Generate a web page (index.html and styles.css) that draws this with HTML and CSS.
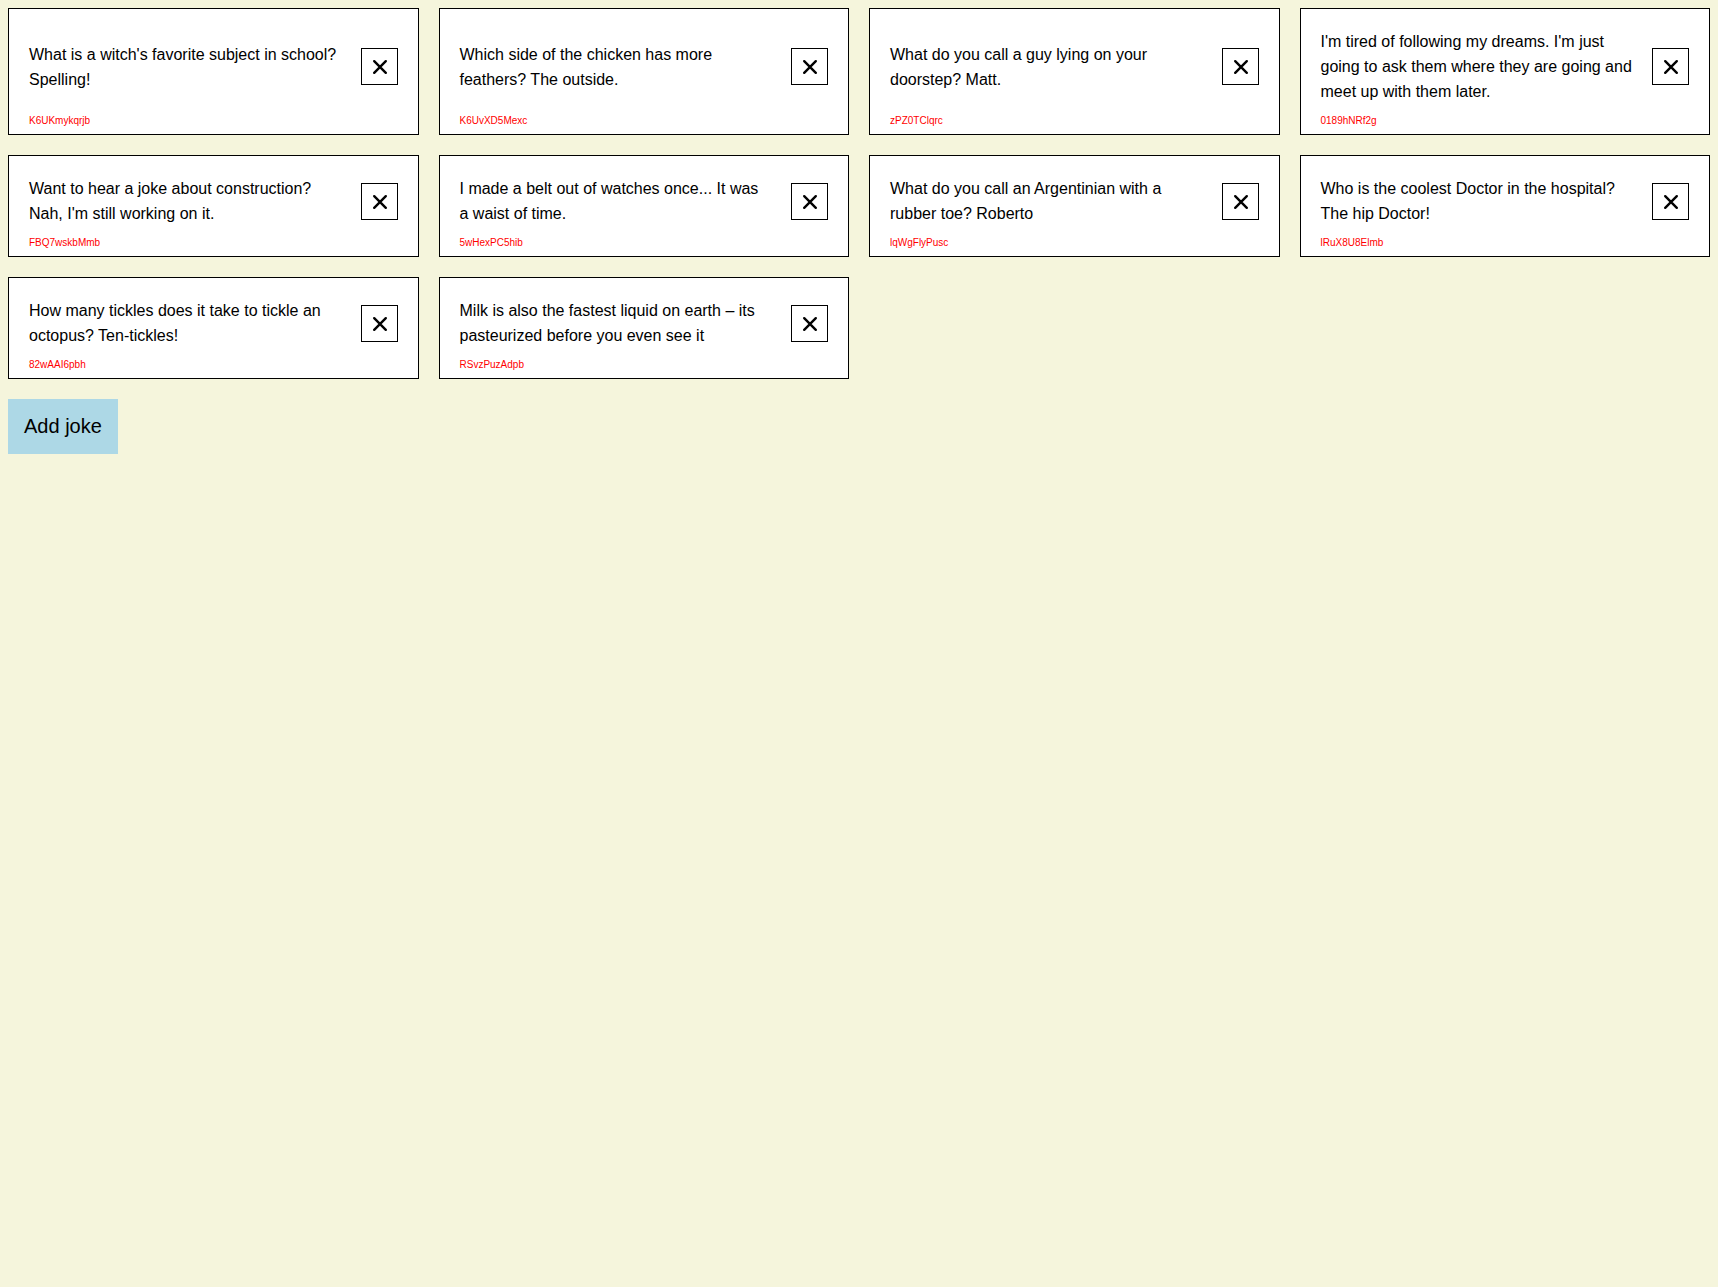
FILE: index.html
```html
<!DOCTYPE html>
<html lang="en">
<head>
<meta charset="utf-8">
<meta name="viewport" content="width=device-width, initial-scale=1">
<title>Jokes</title>
<link rel="stylesheet" href="styles.css">
</head>
<body>
<svg class="sprite" aria-hidden="true">
  <symbol id="close" viewBox="0 0 25 25"><path d="M7.2 7.2 18.8 18.8M18.8 7.2 7.2 18.8" fill="none" stroke="currentColor" stroke-width="2.4" stroke-linecap="round"/></symbol>
</svg>
<main>
  <ul class="jokes">
    <li class="joke">
      <div class="joke-body"><p class="joke-text">What is a witch's favorite subject in school? Spelling!</p><button class="remove" type="button" aria-label="Remove joke"><svg class="icon"><use href="#close"/></svg></button></div>
      <p class="joke-id">K6UKmykqrjb</p>
    </li>
    <li class="joke">
      <div class="joke-body"><p class="joke-text">Which side of the chicken has more feathers? The outside.</p><button class="remove" type="button" aria-label="Remove joke"><svg class="icon"><use href="#close"/></svg></button></div>
      <p class="joke-id">K6UvXD5Mexc</p>
    </li>
    <li class="joke">
      <div class="joke-body"><p class="joke-text">What do you call a guy lying on your doorstep? Matt.</p><button class="remove" type="button" aria-label="Remove joke"><svg class="icon"><use href="#close"/></svg></button></div>
      <p class="joke-id">zPZ0TClqrc</p>
    </li>
    <li class="joke">
      <div class="joke-body"><p class="joke-text">I'm tired of following my dreams. I'm just going to ask them where they are going and meet up with them later.</p><button class="remove" type="button" aria-label="Remove joke"><svg class="icon"><use href="#close"/></svg></button></div>
      <p class="joke-id">0189hNRf2g</p>
    </li>
    <li class="joke">
      <div class="joke-body"><p class="joke-text">Want to hear a joke about construction? Nah, I'm still working on it.</p><button class="remove" type="button" aria-label="Remove joke"><svg class="icon"><use href="#close"/></svg></button></div>
      <p class="joke-id">FBQ7wskbMmb</p>
    </li>
    <li class="joke">
      <div class="joke-body"><p class="joke-text">I made a belt out of watches once... It was a waist of time.</p><button class="remove" type="button" aria-label="Remove joke"><svg class="icon"><use href="#close"/></svg></button></div>
      <p class="joke-id">5wHexPC5hib</p>
    </li>
    <li class="joke">
      <div class="joke-body"><p class="joke-text">What do you call an Argentinian with a rubber toe? Roberto</p><button class="remove" type="button" aria-label="Remove joke"><svg class="icon"><use href="#close"/></svg></button></div>
      <p class="joke-id">lqWgFlyPusc</p>
    </li>
    <li class="joke">
      <div class="joke-body"><p class="joke-text">Who is the coolest Doctor in the hospital? The hip Doctor!</p><button class="remove" type="button" aria-label="Remove joke"><svg class="icon"><use href="#close"/></svg></button></div>
      <p class="joke-id">lRuX8U8Elmb</p>
    </li>
    <li class="joke">
      <div class="joke-body"><p class="joke-text">How many tickles does it take to tickle an octopus? Ten-tickles!</p><button class="remove" type="button" aria-label="Remove joke"><svg class="icon"><use href="#close"/></svg></button></div>
      <p class="joke-id">82wAAI6pbh</p>
    </li>
    <li class="joke">
      <div class="joke-body"><p class="joke-text">Milk is also the fastest liquid on earth – its pasteurized before you even see it</p><button class="remove" type="button" aria-label="Remove joke"><svg class="icon"><use href="#close"/></svg></button></div>
      <p class="joke-id">RSvzPuzAdpb</p>
    </li>
  </ul>
  <button class="add" type="button">Add joke</button>
</main>
</body>
</html>
```
FILE: styles.css
```css
* {
  box-sizing: border-box;
}

body {
  margin: 8px;
  background: beige;
  color: #000;
  font-family: Arial, "Liberation Sans", sans-serif;
  font-size: 16px;
  line-height: 25px;
}

.sprite {
  display: none;
}

.jokes {
  display: grid;
  grid-template-columns: repeat(auto-fill, minmax(350px, 1fr));
  gap: 20px;
  margin: 0 0 20px;
  padding: 0;
  list-style: none;
}

.joke {
  display: flex;
  flex-direction: column;
  padding: 20px 20px 6px;
  border: 1px solid #000;
  background: #fff;
}

.joke-body {
  display: flex;
  flex: 1;
  align-items: center;
  justify-content: space-between;
  gap: 20px;
}

.joke-text {
  margin: 0;
}

.joke-id {
  margin: 9px 0 0;
  color: red;
  font-size: 10px;
  line-height: 15px;
}

.remove {
  display: grid;
  flex: none;
  place-items: center;
  width: 37px;
  height: 37px;
  padding: 0;
  border: 1px solid #000;
  background: #fff;
  color: #000;
  cursor: pointer;
}

.icon {
  width: 25px;
  height: 25px;
}

.add {
  padding: 16px;
  border: 0;
  background: lightblue;
  color: #000;
  font: 20px Arial, "Liberation Sans", sans-serif;
  cursor: pointer;
}
```
